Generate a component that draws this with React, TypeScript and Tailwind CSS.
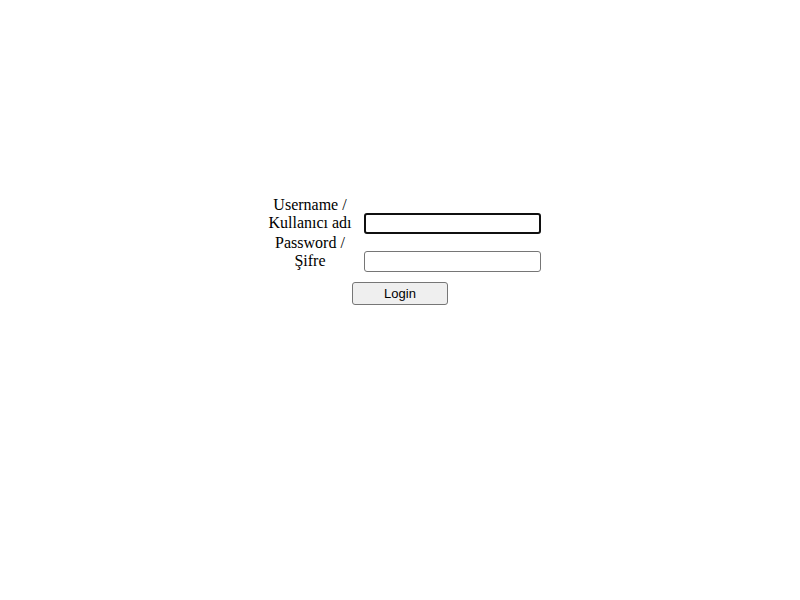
import {useState} from "react";

const rowStyle = "flex h-[38px] gap-[6px]";
const labelStyle = "w-24 px-1 text-center leading-[18px]";
const inputStyle = "block self-end w-[177px] h-[21px] px-1 rounded-[3px] bg-white text-sm outline-none";

const App = () => {
    const [username, setUsername] = useState("")
    const [password, setPassword] = useState("")

    const handleSubmit = (e: React.FormEvent) => {
        e.preventDefault();
    }

    return (
        <main className="min-h-screen bg-white pt-49 font-['Liberation_Serif',serif] text-base text-black">
            <form onSubmit={handleSubmit} className="flex flex-col items-center">
                <div className="pl-[3px]">
                    {/* Username */}
                    <div className={rowStyle}>
                        <label htmlFor="username" className={labelStyle}>
                            Username / Kullanıcı adı
                        </label>
                        <input
                            id="username"
                            type="text"
                            value={username}
                            onChange={(e) => setUsername(e.target.value)}
                            className={inputStyle + " border-2 border-[#101010]"}
                            autoFocus
                        />
                    </div>

                    {/* Password */}
                    <div className={rowStyle}>
                        <label htmlFor="password" className={labelStyle}>
                            Password / Şifre
                        </label>
                        <input
                            id="password"
                            type="password"
                            value={password}
                            onChange={(e) => setPassword(e.target.value)}
                            className={inputStyle + " border border-[#767676]"}
                        />
                    </div>
                </div>

                {/* Button */}
                <button
                    type="submit"
                    className="mt-[10px] h-[23px] w-24 rounded-[3px] border border-[#767676] bg-[#efefef] font-['Liberation_Sans',sans-serif] text-[13px] leading-4"
                >
                    Login
                </button>
            </form>
        </main>
    )
}

export default App
